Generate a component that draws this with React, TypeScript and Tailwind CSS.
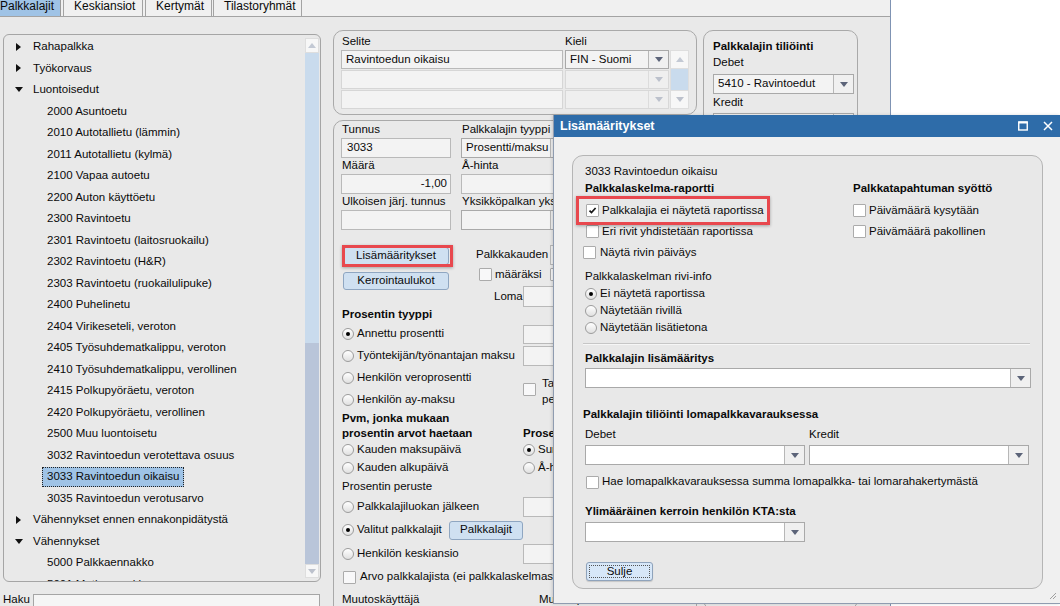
import React from 'react';

type Node = { t: string; lvl: 0 | 1; open?: boolean; sel?: boolean };

const TREE: Node[] = [
  { t: 'Rahapalkka', lvl: 0 },
  { t: 'Työkorvaus', lvl: 0 },
  { t: 'Luontoisedut', lvl: 0, open: true },
  { t: '2000 Asuntoetu', lvl: 1 },
  { t: '2010 Autotallietu (lämmin)', lvl: 1 },
  { t: '2011 Autotallietu (kylmä)', lvl: 1 },
  { t: '2100 Vapaa autoetu', lvl: 1 },
  { t: '2200 Auton käyttöetu', lvl: 1 },
  { t: '2300 Ravintoetu', lvl: 1 },
  { t: '2301 Ravintoetu (laitosruokailu)', lvl: 1 },
  { t: '2302 Ravintoetu (H&R)', lvl: 1 },
  { t: '2303 Ravintoetu (ruokailulipuke)', lvl: 1 },
  { t: '2400 Puhelinetu', lvl: 1 },
  { t: '2404 Virikeseteli, veroton', lvl: 1 },
  { t: '2405 Työsuhdematkalippu, veroton', lvl: 1 },
  { t: '2410 Työsuhdematkalippu, verollinen', lvl: 1 },
  { t: '2415 Polkupyöräetu, veroton', lvl: 1 },
  { t: '2420 Polkupyöräetu, verollinen', lvl: 1 },
  { t: '2500 Muu luontoisetu', lvl: 1 },
  { t: '3032 Ravintoedun verotettava osuus', lvl: 1 },
  { t: '3033 Ravintoedun oikaisu', lvl: 1, sel: true },
  { t: '3035 Ravintoedun verotusarvo', lvl: 1 },
  { t: 'Vähennykset ennen ennakonpidätystä', lvl: 0 },
  { t: 'Vähennykset', lvl: 0, open: true },
  { t: '5000 Palkkaennakko', lvl: 1 },
  { t: '5001 Matkaennakko', lvl: 1 },
];

function Arrow({ light }: { light?: boolean }) {
  return (
    <svg width="8" height="5" viewBox="0 0 8 5">
      <path d="M0 0h8L4 5z" fill={light ? '#bcc1cc' : '#5c6479'} />
    </svg>
  );
}

function Select({
  text = '',
  w,
  h = 'h-[20px]',
  tone = 'gray',
  cls = '',
}: {
  text?: string;
  w: string;
  h?: string;
  tone?: 'gray' | 'white' | 'light';
  cls?: string;
}) {
  const box =
    tone === 'white'
      ? 'border-[#a9a9a9] bg-white'
      : tone === 'light'
        ? 'border-[#d8d8d8] bg-[#efefef]'
        : 'border-[#a9a9a9] bg-[#f3f3f3]';
  const btn = tone === 'light' ? 'border-[#dcdcdc]' : 'border-[#b7b7b7] bg-[#f0f0f0]';
  return (
    <div className={`flex shrink-0 border ${box} ${w} ${h} ${cls}`}>
      <div className="flex min-w-0 flex-1 items-center overflow-hidden whitespace-nowrap pl-[4px]">{text}</div>
      <div className={`flex w-[20px] items-center justify-center border-l ${btn}`}>
        <Arrow light={tone === 'light'} />
      </div>
    </div>
  );
}

function Field({ cls = '', children }: { cls?: string; children?: React.ReactNode }) {
  return (
    <div className={`flex shrink-0 items-center overflow-hidden whitespace-nowrap border border-[#b9b9b9] bg-[#f3f3f3] px-[5px] ${cls}`}>
      {children}
    </div>
  );
}

function Check({ on, cls = '' }: { on?: boolean; cls?: string }) {
  return (
    <span className={`flex h-[13px] w-[13px] shrink-0 items-center justify-center rounded-[1px] border border-[#ababab] bg-[#f8f8f9] ${cls}`}>
      {on && (
        <svg width="11" height="11" viewBox="0 0 11 11">
          <path d="M2.5 5.6L4.5 7.6L8.6 3" fill="none" stroke="#151515" strokeWidth="1.7" />
        </svg>
      )}
    </span>
  );
}

function Radio({ on }: { on?: boolean }) {
  return (
    <span className="flex h-[12px] w-[12px] shrink-0 items-center justify-center rounded-full border border-[#9c9c9c] bg-linear-to-b from-white to-[#e0e0e0]">
      {on && <span className="h-[4px] w-[4px] rounded-full bg-black" />}
    </span>
  );
}

function Opt({ on, children }: { on?: boolean; children: React.ReactNode }) {
  return (
    <span className="flex items-center gap-[3px] whitespace-nowrap">
      <Radio on={on} />
      {children}
    </span>
  );
}

function Btn({ cls = '', children }: { cls?: string; children: React.ReactNode }) {
  return (
    <div className={`flex shrink-0 items-center justify-center rounded-[3px] border border-[#8fa6c1] bg-[#cfe0f1] ${cls}`}>
      {children}
    </div>
  );
}

function Lbl({ children }: { children: React.ReactNode }) {
  return <div className="flex h-[16px] items-center whitespace-nowrap pl-[1px]">{children}</div>;
}

function TreeRow({ n }: { n: Node }) {
  if (n.lvl === 0) {
    return (
      <div className="flex h-[21.5px] items-center whitespace-nowrap">
        <span className={`flex w-[29px] ${n.open ? 'pl-[11px]' : 'pl-[12px]'}`}>
          {n.open ? (
            <svg width="8" height="5" viewBox="0 0 8 5">
              <path d="M0 0h8L4 5z" fill="#111" />
            </svg>
          ) : (
            <svg width="5" height="8" viewBox="0 0 5 8">
              <path d="M0 0L5 4L0 8z" fill="#111" />
            </svg>
          )}
        </span>
        {n.t}
      </div>
    );
  }
  return (
    <div className="flex h-[21.5px] items-center whitespace-nowrap pl-[38px]">
      <span
        className={`flex h-[20px] items-center px-[4px] ${
          n.sel ? 'border border-dotted border-[#222] bg-[#9fc3e6]' : 'border border-transparent'
        }`}
      >
        {n.t}
      </span>
    </div>
  );
}

export default function App() {
  return (
    <div className="relative h-[606px] w-[1060px] overflow-hidden bg-white font-['Liberation_Sans',Arial,sans-serif] text-[11.5px] leading-none text-[#0a0a0a]">
      {/* main window */}
      <div className="flex h-full w-[891px] flex-col border-r border-[#7f93b3] bg-[#e9e9e9]">
        {/* tabs */}
        <div className="flex h-[17px] shrink-0 border-b border-[#a3a3a3] bg-[#f0f0f0] text-[12px] leading-[13px]">
          <div className="w-[61px] border-r border-[#9a9a9a] bg-[#9fc3e6]">Palkkalajit</div>
          <div className="ml-[2px] w-[80px] border-x border-[#a3a3a3] pl-[10px]">Keskiansiot</div>
          <div className="ml-[2px] w-[67px] border-x border-[#a3a3a3] pl-[10px]">Kertymät</div>
          <div className="ml-[1px] w-[89px] border-x border-[#a3a3a3] pl-[10px]">Tilastoryhmät</div>
        </div>

        <div className="flex min-h-0 flex-1 pt-[13px]">
          {/* tree column */}
          <div className="flex w-[321px] shrink-0 flex-col pl-[3px] pt-[4px]">
            <div className="flex h-[548px] shrink-0 overflow-hidden rounded-[6px] border border-[#a5a5a5]">
              <div className="min-w-0 flex-1 overflow-hidden pt-[1px]">
                {TREE.map((n) => (
                  <TreeRow key={n.t} n={n} />
                ))}
              </div>
              <div className="my-[3px] mr-[1px] flex w-[14px] flex-col">
                <div className="flex h-[15px] items-center justify-center border border-[#dedede] bg-[#f7f7f7]">
                  <svg width="8" height="5" viewBox="0 0 8 5">
                    <path d="M0 5h8L4 0z" fill="#c3c9d4" />
                  </svg>
                </div>
                <div className="h-[290px] bg-[#c9dbed]" />
                <div className="flex-1 bg-[#b9c5d9]" />
                <div className="flex h-[14px] items-center justify-center border border-[#dedede] bg-[#f7f7f7]">
                  <Arrow light />
                </div>
              </div>
            </div>
            <div className="mt-[12px] flex items-start">
              <span className="w-[30px]">Haku</span>
              <div className="h-[20px] w-[287px] border border-[#a5a5a5] bg-[#f5f5f5]" />
            </div>
          </div>

          {/* middle column */}
          <div className="ml-[12px] flex w-[364px] shrink-0 flex-col">
            <div className="h-[85px] shrink-0 rounded-[10px] border border-[#a9a9a9] px-[7px]">
              <div className="flex h-[19px] items-center pt-[2px]">
                <span className="w-[224px] pl-[1px]">Selite</span>
                <span>Kieli</span>
              </div>
              <div className="flex">
                <div className="flex flex-col gap-[1px]">
                  <div className="flex gap-[2px]">
                    <Field cls="h-[19px] w-[222px] border-[#b0b0b0] pl-[4px]">Ravintoedun oikaisu</Field>
                    <Select text="FIN - Suomi" w="w-[104px]" h="h-[19px]" cls="border-[#9d9d9d]" />
                  </div>
                  <div className="flex gap-[2px]">
                    <Field cls="h-[19px] w-[222px] border-[#d6d6d6]" />
                    <Select w="w-[104px]" h="h-[19px]" tone="light" />
                  </div>
                  <div className="flex gap-[2px]">
                    <Field cls="h-[19px] w-[222px] border-[#d6d6d6]" />
                    <Select w="w-[104px]" h="h-[19px]" tone="light" />
                  </div>
                </div>
                <div className="ml-[1px] flex w-[19px] flex-col">
                  <div className="flex h-[19px] items-center justify-center border border-[#dedede] bg-[#f7f7f7]">
                    <svg width="8" height="5" viewBox="0 0 8 5">
                      <path d="M0 5h8L4 0z" fill="#c3c9d4" />
                    </svg>
                  </div>
                  <div className="h-[21px] border-x border-[#dedede] bg-[#c9dbed]" />
                  <div className="flex h-[19px] items-center justify-center border border-[#dedede] bg-[#f7f7f7]">
                    <Arrow light />
                  </div>
                </div>
              </div>
            </div>

            {/* main form panel */}
            <div className="mt-[5px] h-[520px] shrink-0 overflow-hidden rounded-[10px] border border-[#a9a9a9] px-[7px] pt-[1px]">
              <div className="grid grid-cols-[110px_110px] gap-x-[10px]">
                <Lbl>Tunnus</Lbl>
                <Lbl>Palkkalajin tyyppi</Lbl>
                <Field cls="h-[20px]">3033</Field>
                <Select text="Prosentti/maksu" w="w-[110px]" />
                <Lbl>Määrä</Lbl>
                <Lbl>Å-hinta</Lbl>
                <Field cls="h-[20px] justify-end pr-[3px]">-1,00</Field>
                <Field cls="h-[20px]" />
                <Lbl>Ulkoisen järj. tunnus</Lbl>
                <Lbl>Yksikköpalkan yksikkö</Lbl>
                <Field cls="h-[20px]" />
                <Select w="w-[110px]" />
              </div>

              <div className="flex h-[77px]">
                <div className="flex w-[135px] shrink-0 flex-col gap-[7px] pl-[2px] pt-[17px]">
                  <div className="relative">
                    <Btn cls="h-[18px] w-[106px]">Lisämääritykset</Btn>
                    <div className="absolute left-[-1px] top-[-2px] h-[22px] w-[111px] border-[3px] border-[#e8484e] shadow-[0_1px_3px_rgba(0,0,0,0.3)]" />
                  </div>
                  <Btn cls="h-[18px] w-[106px]">Kerrointaulukot</Btn>
                </div>
                <div className="flex flex-col">
                  <div className="mt-[15px] flex h-[20px] items-center">
                    <span className="w-[74px] whitespace-nowrap">Palkkakauden</span>
                    <Field cls="h-[20px] w-[40px]" />
                  </div>
                  <div className="mt-[3px] flex h-[14px] items-center">
                    <span className="flex w-[74px] items-center pl-[3px]">
                      <Check />
                      <span className="ml-[3px]">määräksi</span>
                    </span>
                    <Check />
                  </div>
                  <div className="mt-[5px] flex h-[21px] items-center">
                    <span className="w-[47px] pl-[18px]">Loma</span>
                    <Field cls="h-[21px] w-[40px]" />
                  </div>
                </div>
              </div>

              <div className="flex h-[16px] items-center pl-[1px] font-bold">Prosentin tyyppi</div>
              <div className="flex h-[22px] items-center">
                <div className="flex w-[182px] shrink-0 pl-[1px]">
                  <Opt on>Annettu prosentti</Opt>
                </div>
                <Field cls="h-[19px] w-[40px]" />
              </div>
              <div className="flex h-[22px] items-center">
                <div className="flex w-[182px] shrink-0 pl-[1px]">
                  <Opt>Työntekijän/työnantajan maksu</Opt>
                </div>
                <Field cls="h-[20px] w-[40px]" />
              </div>
              <div className="flex h-[44px]">
                <div className="flex w-[182px] shrink-0 flex-col pl-[1px]">
                  <div className="flex h-[22px] items-center">
                    <Opt>Henkilön veroprosentti</Opt>
                  </div>
                  <div className="flex h-[22px] items-center">
                    <Opt>Henkilön ay-maksu</Opt>
                  </div>
                </div>
                <div className="flex items-start gap-[6px] pt-[8px]">
                  <Check cls="mt-[8px] bg-[#e6e8ee]" />
                  <div className="flex flex-col leading-[16px]">
                    <span>Ta</span>
                    <span>pe</span>
                  </div>
                </div>
              </div>
              <div className="flex h-[30px] font-bold leading-[15px]">
                <div className="flex w-[182px] shrink-0 flex-col pl-[1px]">
                  <span>Pvm, jonka mukaan</span>
                  <span>prosentin arvot haetaan</span>
                </div>
                <div className="pt-[15px]">Prosentti</div>
              </div>
              <div className="flex h-[18px] items-center">
                <div className="flex w-[182px] shrink-0 pl-[1px]">
                  <Opt>Kauden maksupäivä</Opt>
                </div>
                <Opt on>Summa</Opt>
              </div>
              <div className="flex h-[18px] items-center">
                <div className="flex w-[182px] shrink-0 pl-[1px]">
                  <Opt>Kauden alkupäivä</Opt>
                </div>
                <Opt>Å-hinta</Opt>
              </div>
              <div className="flex h-[19px] items-center pl-[1px]">Prosentin peruste</div>
              <div className="flex h-[21px] items-center">
                <div className="flex w-[182px] shrink-0 pl-[1px]">
                  <Opt>Palkkalajiluokan jälkeen</Opt>
                </div>
                <Field cls="h-[20px] w-[40px]" />
              </div>
              <div className="flex h-[26px] items-center">
                <div className="flex w-[182px] shrink-0 items-center pl-[1px]">
                  <Opt on>Valitut palkkalajit</Opt>
                  <Btn cls="ml-auto h-[19px] w-[74px]">Palkkalajit</Btn>
                </div>
              </div>
              <div className="flex h-[22px] items-center">
                <div className="flex w-[182px] shrink-0 pl-[1px]">
                  <Opt>Henkilön keskiansio</Opt>
                </div>
                <Field cls="h-[20px] w-[40px]" />
              </div>
              <div className="flex h-[24px] items-center whitespace-nowrap pl-[2px]">
                <Check />
                <span className="ml-[4px]">Arvo palkkalajista (ei palkkalaskelmasta)</span>
              </div>
              <div className="flex h-[22px] items-center whitespace-nowrap">
                <span className="w-[198px] pl-[1px]">Muutoskäyttäjä</span>
                <span>Muutospäivä</span>
              </div>
            </div>
          </div>

          {/* posting panel */}
          <div className="ml-[6px] h-[580px] w-[155px] shrink-0 rounded-[10px] border border-[#a9a9a9] px-[9px] pt-[8px]">
            <div className="flex h-[16px] items-center whitespace-nowrap font-bold">Palkkalajin tiliöinti</div>
            <div className="flex h-[16px] items-center">Debet</div>
            <Select text="5410 - Ravintoedut" w="w-[141px]" cls="mt-[3px]" />
            <div className="mt-[1px] flex h-[16px] items-center">Kredit</div>
            <Select w="w-[141px]" cls="mt-[2px]" />
          </div>
        </div>
      </div>

      {/* dialog */}
      <div className="absolute left-[553px] top-[115px] flex h-[489px] w-[507px] flex-col border-b border-l border-[#8f9cb0] bg-[#f0f0f0] shadow-[-1px_0_3px_rgba(0,0,0,0.15)]">
        <div className="flex h-[22px] shrink-0 items-center bg-[#2e6ca9] pl-[6px] pr-[7px] text-[12.5px] font-bold text-white">
          <span>Lisämääritykset</span>
          <span className="ml-auto flex items-center gap-[15px]">
            <svg width="10" height="10" viewBox="0 0 10 10">
              <rect x="0.75" y="1" width="8.5" height="8" fill="none" stroke="white" strokeWidth="1.4" />
              <line x1="0.5" y1="1.5" x2="9.5" y2="1.5" stroke="white" strokeWidth="2" />
            </svg>
            <svg width="10" height="10" viewBox="0 0 10 10">
              <path d="M1 1L9 9M9 1L1 9" stroke="white" strokeWidth="1.5" />
            </svg>
          </span>
        </div>
        <div className="ml-[18px] mt-[18px] h-[434px] w-[471px] shrink-0 rounded-[11px] border border-[#b5b5b5] bg-[#e8e8e8] px-[12px] pt-[8px]">
          <div className="flex h-[16px] items-center">3033 Ravintoedun oikaisu</div>
          <div className="mt-[1px] flex">
            <div className="flex w-[268px] shrink-0 flex-col">
              <div className="flex h-[16px] items-center font-bold">Palkkalaskelma-raportti</div>
              <div className="relative mt-[3px] flex h-[21px] items-center">
                <Check on cls="ml-[1px] bg-white" />
                <span className="ml-[3px]">Palkkalajia ei näytetä raportissa</span>
                <div className="absolute left-[-9px] top-[-4px] h-[29px] w-[194px] border-[3px] border-[#e8484e] shadow-[0_1px_3px_rgba(0,0,0,0.3)]" />
              </div>
              <div className="flex h-[21px] items-center">
                <Check cls="ml-[1px] bg-white" />
                <span className="ml-[3px]">Eri rivit yhdistetään raportissa</span>
              </div>
              <div className="flex h-[21px] items-center">
                <Check cls="-ml-[2px] bg-white" />
                <span className="ml-[4px]">Näytä rivin päiväys</span>
              </div>
            </div>
            <div className="flex flex-col">
              <div className="flex h-[16px] items-center font-bold">Palkkatapahtuman syöttö</div>
              <div className="mt-[3px] flex h-[21px] items-center">
                <Check cls="bg-white" />
                <span className="ml-[3px]">Päivämäärä kysytään</span>
              </div>
              <div className="flex h-[21px] items-center">
                <Check cls="bg-white" />
                <span className="ml-[3px]">Päivämäärä pakollinen</span>
              </div>
            </div>
          </div>
          <div className="mt-[6px] flex h-[16px] items-center">Palkkalaskelman rivi-info</div>
          <div className="flex h-[17px] items-center">
            <Opt on>Ei näytetä raportissa</Opt>
          </div>
          <div className="flex h-[17px] items-center">
            <Opt>Näytetään rivillä</Opt>
          </div>
          <div className="flex h-[17px] items-center">
            <Opt>Näytetään lisätietona</Opt>
          </div>
          <div className="-ml-[2px] mt-[7px] h-[2px] w-[447px] border-b border-t border-b-[#f6f6f6] border-t-[#c6c6c6]" />
          <div className="mt-[6px] flex h-[16px] items-center font-bold">Palkkalajin lisämääritys</div>
          <Select w="w-[446px]" tone="white" cls="mt-[1px]" />
          <div className="-ml-[2px] mt-[19px] flex h-[16px] items-center font-bold">Palkkalajin tiliöinti lomapalkkavarauksessa</div>
          <div className="mt-[4px] grid grid-cols-[220px_220px] gap-x-[4px]">
            <div className="flex h-[16px] items-center">Debet</div>
            <div className="flex h-[16px] items-center">Kredit</div>
            <Select w="w-[220px]" tone="white" cls="mt-[2px]" />
            <Select w="w-[220px]" tone="white" cls="mt-[2px]" />
          </div>
          <div className="mt-[8px] flex h-[18px] items-center">
            <Check cls="ml-[1px] bg-white" />
            <span className="ml-[3px]">Hae lomapalkkavarauksessa summa lomapalkka- tai lomarahakertymästä</span>
          </div>
          <div className="mt-[13px] flex h-[16px] items-center font-bold">Ylimääräinen kerroin henkilön KTA:sta</div>
          <Select w="w-[220px]" tone="white" cls="mt-[2px]" />
          <div className="ml-[1px] mt-[20px] flex h-[19px] w-[67px] items-center justify-center rounded-[3px] border border-[#8fa3bb] bg-[#d7e7f8] p-[2px] shadow-[0_1px_1px_rgba(0,0,0,0.15)]">
            <div className="flex h-full w-full items-center justify-center border border-dotted border-[#555]">Sulje</div>
          </div>
        </div>
        <svg className="absolute bottom-[3px] right-[3px]" width="9" height="9" viewBox="0 0 9 9">
          <path d="M8 2L2 8M8 5L5 8" stroke="#a0a0a0" strokeWidth="1" />
        </svg>
      </div>
    </div>
  );
}
